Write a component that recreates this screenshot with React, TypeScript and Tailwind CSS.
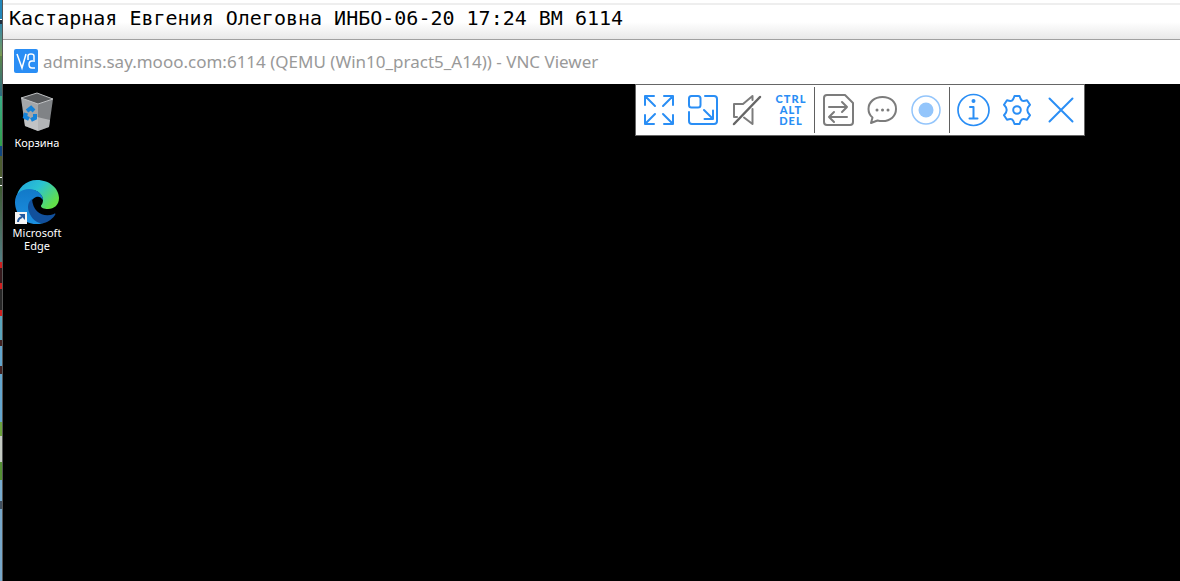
import type { ReactNode } from 'react';

const iconProps = {
  width: 36,
  height: 36,
  viewBox: '0 0 36 36',
  fill: 'none',
  stroke: 'currentColor',
  strokeWidth: 2,
  strokeLinecap: 'round',
  strokeLinejoin: 'round',
} as const;

function ToolButton({ label, muted, children }: { label: string; muted?: boolean; children: ReactNode }) {
  return (
    <button
      type="button"
      aria-label={label}
      className={`flex h-full w-11 items-center justify-center ${muted ? 'text-[#7c7c7c]' : 'text-[#2a8ef5]'}`}
    >
      {children}
    </button>
  );
}

function Separator() {
  return <div className="mx-px my-0.5 w-px bg-[#606060]" />;
}

function Toolbar() {
  return (
    <div role="toolbar" aria-label="VNC" className="mr-[95px] flex h-[52px] border border-[#666] bg-white px-px">
      <ToolButton label="Full screen">
        <svg {...iconProps}>
          <path d="M4 13V4h9M4 4l10 10M23 4h9v9M32 4 22 14M4 23v9h9M4 32l10-10M32 23v9h-9M32 32 22 22" />
        </svg>
      </ToolButton>
      <ToolButton label="Scale">
        <svg {...iconProps}>
          <rect x="4" y="4" width="11.5" height="11.5" rx="2.5" />
          <path d="M20 4h9a3 3 0 0 1 3 3v22a3 3 0 0 1-3 3H7a3 3 0 0 1-3-3v-9M19 18l8.500 8.500M28 18.500V27h-8.500" />
        </svg>
      </ToolButton>
      <ToolButton label="Mute" muted>
        <svg {...iconProps}>
          <path d="M23.500 8V4L14 12H5v13h3M23.500 17v15L15 25.500" />
          <path d="M5 32 31 5" stroke="#666" strokeWidth="2.500" />
        </svg>
      </ToolButton>
      <ToolButton label="Ctrl Alt Del">
        <span className="pb-0.5 font-['Lato','Noto_Sans',sans-serif] text-[11px] leading-[11px] font-black tracking-widest">
          CTRL
          <br />
          ALT
          <br />
          DEL
        </span>
      </ToolButton>
      <Separator />
      <ToolButton label="Transfer files" muted>
        <svg {...iconProps}>
          <path d="M7 3h18l8 8v19a3 3 0 0 1-3 3H7a3 3 0 0 1-3-3V6a3 3 0 0 1 3-3z" />
          <path d="M9 15h18M22 10l5 5-5 5M27 25H9M14 20l-5 5 5 5" />
        </svg>
      </ToolButton>
      <ToolButton label="Chat" muted>
        <svg {...iconProps}>
          <path d="M18.500 5C10.500 5 4.500 10 4.500 17c0 3.500 1.500 6.500 4 8.500L7 31l6.500-2.500c1.500.4 3.200.6 5 .6 8 0 13.500-5 13.500-12.100S26.500 5 18.500 5z" />
          <path d="M13 18h.01M18.500 18h.01M24 18h.01" strokeWidth="3" />
        </svg>
      </ToolButton>
      <ToolButton label="Record">
        <svg {...iconProps} stroke="#93c5fb">
          <circle cx="18" cy="18" r="14" strokeWidth="1.500" />
          <circle cx="18" cy="18" r="7.500" fill="#93c5fb" stroke="none" />
        </svg>
      </ToolButton>
      <Separator />
      <ToolButton label="Information">
        <svg {...iconProps}>
          <circle cx="18.500" cy="18" r="15.500" strokeWidth="1.700" />
          <circle cx="18.500" cy="9" r="2" fill="currentColor" stroke="none" />
          <path d="M15 15h3.500v11.500M14.500 26.500h8" />
        </svg>
      </ToolButton>
      <ToolButton label="Properties">
        <svg {...iconProps}>
          <path d="M15.500 4h5q1.200 3.800 2.500 4.600t5-.3l3 4.500q-2.700 2.700-2.700 5.200t2.700 5.200l-3 4.500q-3.700-1.100-5-.3T20.500 32h-5q-1.200-3.800-2.500-4.600t-5 .3l-3-4.500q2.700-2.700 2.700-5.200t-2.700-5.200l3-4.500q3.700 1.100 5 .3T15.500 4z" />
          <circle cx="18" cy="18" r="3.800" />
        </svg>
      </ToolButton>
      <ToolButton label="Close">
        <svg {...iconProps}>
          <path d="m6.500 6.500 23 23M29.500 6.500l-23 23" />
        </svg>
      </ToolButton>
    </div>
  );
}

function RecycleBin() {
  return (
    <svg width="44" height="44" viewBox="0 0 44 44">
      <path d="m6 8 16-5 16 6-15 6z" fill="#57595b" />
      <path d="m6 8 17 6v27L10 36z" fill="#a3a6a9" />
      <path d="m23 14 15-5-4 28-11 4z" fill="#808386" />
      <path d="m9 30 13-3 13 3-1 7-11 4-13-5z" fill="#d5d7d9" opacity=".6" />
      <path d="m6 8 16-5 16 6-15 5z" fill="none" stroke="#bfc1c3" />
      <path d="m12 21 4-3 3 3M20 24v4l-4 2M14 29l-4-2 1-4" fill="none" stroke="#1482d8" strokeWidth="4" />
    </svg>
  );
}

function EdgeLogo() {
  return (
    <svg width="44" height="44" viewBox="0 0 44 44">
      <defs>
        <linearGradient id="edge-top" x1="0" y1="0" x2="1" y2="0.6">
          <stop offset="0" stopColor="#1e9fdf" />
          <stop offset="0.5" stopColor="#2bc3d2" />
          <stop offset="1" stopColor="#62e04a" />
        </linearGradient>
        <linearGradient id="edge-body" x1="0" y1="0" x2="0" y2="1">
          <stop offset="0" stopColor="#1279c8" />
          <stop offset="1" stopColor="#1b90e2" />
        </linearGradient>
      </defs>
      <path d="M1 20C2 8 11 0 22 0c13 0 22 9 22 18 0 7-5 11-11 11-4 0-7-1-7-3 0-1 2-2 2-6 0-5-5-10-12-10C8 10 2 15 1 20z" fill="url(#edge-top)" />
      <path d="M0 22c0-8 6-13 14-13 8 0 14 5 14 11-2-3-4-4-7-3-5 2-8 8-6 14 2 7 8 12 14 12-4 1-6 1-8 1C9 44 0 34 0 22z" fill="url(#edge-body)" />
      <path d="M17 19c-4 3-5 8-3 13 3 8 9 12 15 11 5-1 9-5 11-8 1-1 0-2-1-1-10 4-21-1-22-15z" fill="#11509c" />
      <path d="M0 32h12v12H0z" fill="#f4f4f4" />
      <path d="M3 42c0-3 1-4 4-5" fill="none" stroke="#235aa0" strokeWidth="2" />
      <path d="M4 34h6v6z" fill="#235aa0" />
    </svg>
  );
}

function VncLogo() {
  return (
    <svg width="24" height="24" viewBox="0 0 24 24" fill="none" className="mb-0.5">
      <rect width="24" height="24" rx="2" fill="#2a8ef5" />
      <path d="m3 5 5 14 4-14M14 11V7q0-2 3-2t3 2v4M21 12h-3q-3 0-3 3.500t3 3.500h3" stroke="#fff" strokeWidth="1.500" />
    </svg>
  );
}

function DesktopIcon({ label, children }: { label: ReactNode; children: ReactNode }) {
  return (
    <button type="button" className="flex w-[68px] flex-col items-center gap-0.5 text-[11px] leading-[13px] text-white">
      {children}
      <span>{label}</span>
    </button>
  );
}

// slice of the wallpaper left of the window: [height, colour]
const wallpaper: [string, string][] = [
  ['h-[19px]', 'bg-[#2387b9]'],
  ['h-px', 'bg-white'],
  ['h-1', 'bg-[#203040]'],
  ['h-[32px]', 'bg-linear-to-b from-[#2f86a8] to-[#7a9a50]'],
  ['h-[40px]', 'bg-linear-to-b from-[#5d8648] to-[#2c6a80]'],
  ['h-[50px]', 'bg-linear-to-b from-[#38ad88] to-[#31a04a]'],
  ['h-[10px]', 'bg-[#0f4680]'],
  ['h-[21px]', 'bg-[#4c5c30]'],
  ['h-px', 'bg-white'],
  ['h-[7px]', 'bg-[#30402c]'],
  ['h-px', 'bg-white'],
  ['h-[76px]', 'bg-linear-to-b from-[#3e5a30] to-[#547e84]'],
  ['h-[6px]', 'bg-[#d02020]'],
  ['h-[15px]', 'bg-[#35191c]'],
  ['h-[6px]', 'bg-[#d02020]'],
  ['h-[21px]', 'bg-[#262626]'],
  ['h-[6px]', 'bg-[#d02020]'],
  ['h-[24px]', 'bg-[#5aa5bd]'],
  ['h-[6px]', 'bg-[#402020]'],
  ['h-[20px]', 'bg-[#62a6ce]'],
  ['h-[8px]', 'bg-[#402020]'],
  ['h-[48px]', 'bg-[#65a7cf]'],
  ['h-[14px]', 'bg-[#6ca33e]'],
  ['h-[26px]', 'bg-[#c5cbc3]'],
  ['h-[18px]', 'bg-[#549034]'],
  ['h-[21px]', 'bg-[#78acd0]'],
  ['h-[8px]', 'bg-[#405060]'],
];

export default function App() {
  return (
    <div className="flex min-h-screen bg-black font-['Noto_Sans','Open_Sans',sans-serif]">
      <div className="flex w-[3px] shrink-0 flex-col border-r border-[#555] bg-[#78a9cb]">
        {wallpaper.map(([height, colour], i) => (
          <div key={i} className={`${height} ${colour}`} />
        ))}
      </div>
      <div className="flex min-w-0 grow flex-col">
        <div className="h-[5px] border-b-2 border-[#eee] bg-white" />
        <div className="h-[35px] border-b border-[#a0a0a0] bg-linear-to-b from-white from-50% to-[#e8e8e8] pl-1.5 font-['DejaVu_Sans_Mono','Liberation_Mono',monospace] text-[20px] leading-[26px] whitespace-nowrap text-black">
          Кастарная Евгения Олеговна ИНБО-06-20 17:24 ВМ 6114
        </div>
        <header className="flex h-11 items-center gap-[5px] bg-white pl-[11px]">
          <VncLogo />
          <h1 className="text-[17px] leading-6 whitespace-nowrap text-[#999]">
            admins.say.mooo.com:6114 (QEMU (Win10_pract5_A14)) - VNC Viewer
          </h1>
        </header>
        <main className="flex grow items-start justify-between">
          <div className="flex flex-col gap-[31px] pt-1.5">
            <DesktopIcon label="Корзина">
              <RecycleBin />
            </DesktopIcon>
            <DesktopIcon
              label={
                <>
                  Microsoft
                  <br />
                  Edge
                </>
              }
            >
              <EdgeLogo />
            </DesktopIcon>
          </div>
          <Toolbar />
        </main>
      </div>
    </div>
  );
}
